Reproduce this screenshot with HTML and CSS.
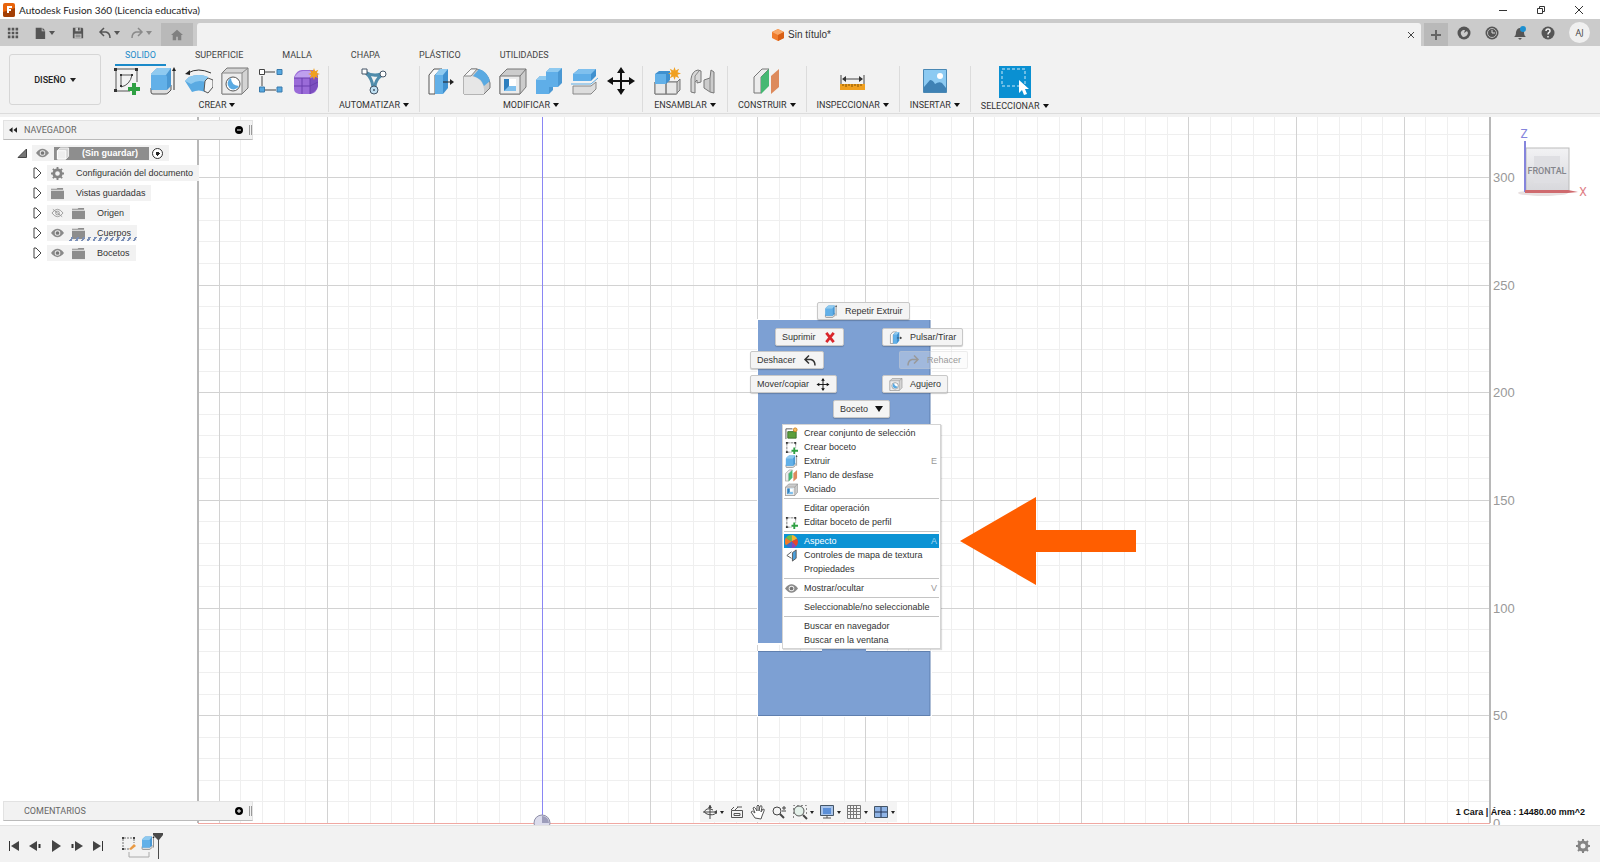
FILE: index.html
```html
<!DOCTYPE html>
<html lang="es">
<head>
    <meta charset="UTF-8">
    <meta name="viewport" content="width=device-width, initial-scale=1.0">
    <title>Autodesk Fusion 360 (Licencia educativa)</title>
    <link rel="stylesheet" href="styles.css">
</head>
<body>

    <!-- Iconos compartidos -->
    <svg class="sprite" aria-hidden="true">
        <symbol id="i-boceto" viewBox="0 0 28 28">
            <path d="M3 2h20M3 2v22M3 24h14M24 3v12" fill="none" stroke="#555" stroke-width="1"/>
            <path d="M8 8v12q9-2 11-12M8 8h11" fill="none" stroke="#555" stroke-width="1"/>
            <path d="M1 1h3v3H1zM22 1h3v3h-3zM1 22h3v3H1zM7 7h2v2H7zM18 7h2v2h-2zM7 18h2v2H7z" fill="#333"/>
            <path d="M19 16h4v4h4v4h-4v4h-4v-4h-4v-4h4z" fill="#2fa043"/>
        </symbol>
        <symbol id="i-boceto-s" viewBox="0 0 14 14">
            <path d="M2 2h10M2 2v10M2 12h5M11.500 2v5" fill="none" stroke="#777" stroke-dasharray="3 1"/>
            <path d="M1 1h2v2H1zM10 1h2v2h-2zM1 11h2v2H1z" fill="#333"/>
            <path d="M10 7v7M7 10.500h7" stroke="#2fa043" stroke-width="2"/>
        </symbol>
        <symbol id="i-extruir" viewBox="0 0 28 28">
            <path d="M2 21v4q0 2 2 2h12q2 0 3-1l3-3v-5z" fill="#ddd" stroke="#555"/>
            <path d="M2 7l5-5q1-1 2-1h13v18l-4 4H2z" fill="#4a98d3"/>
            <path d="M2 8h14q2 0 2 2v13H4q-2 0-2-2z" fill="#62b0e8"/>
            <path d="M2 7l5-5q1-1 2-1h13l-5 7H2z" fill="#8fcaf0"/>
            <path d="M25 3v20" stroke="#333"/>
            <path d="M25 0l2 4h-4z" fill="#222"/>
        </symbol>
        <symbol id="i-revolucion" viewBox="0 0 28 28">
            <path d="M3 6q10-6 23 0" fill="none" stroke="#333"/>
            <path d="M0 7l5-4v5z" fill="#222"/>
            <path d="M0 14l4-4q10-4 19 0l-3 15q-6-3-13 0z" fill="#5aaae2"/>
            <path d="M0 14l4-4q10-4 19 0l-3 5q-7-3-14 2z" fill="#8fcaf0"/>
            <path d="M20 14l3-3 5 2v7l-5 6-4-2z" fill="#f4f4f4" stroke="#555"/>
        </symbol>
        <symbol id="i-agujero" viewBox="0 0 28 28">
            <path d="M1 6l5-5h21v20l-6 6H1z" fill="#d4d4d4" stroke="#777"/>
            <path d="M1 6h20v21H1z" fill="#ececec" stroke="#888"/>
            <path d="M21 6l6-5" stroke="#888"/>
            <circle cx="12" cy="17" r="7" fill="#fff" stroke="#555"/>
            <path d="M10 11a6 6 0 1 0 8 8q-8-1-8-8z" fill="#5aaae2"/>
        </symbol>
        <symbol id="i-patron" viewBox="0 0 28 28">
            <path d="M5 9v10M8 5h10M8 23h11" stroke="#444" fill="none"/>
            <path d="M2.500 2.500h5v5h-5z" fill="#fff" stroke="#444"/>
            <path d="M20 2.500h5v5h-5zM20 20h5v5h-5zM2.500 20h5v5h-5z" fill="#56a8e0" stroke="#3a7bac"/>
        </symbol>
        <symbol id="i-estrella" viewBox="0 0 14 14">
            <path d="M7 0l1.300 3.800L12 2l-1.800 3.700L14 7l-3.800 1.300L12 12l-3.700-1.800L7 14l-1.300-3.800L2 12l1.800-3.700L0 7l3.800-1.300L2 2l3.700 1.800z" fill="#f0a020"/>
        </symbol>
        <symbol id="i-forma" viewBox="0 0 28 28">
            <path d="M1 10q3-7 8-7h11q5 1 5 6v10q-1 7-8 8H6q-5-1-5-5z" fill="#9a6bd8"/>
            <path d="M1 11q4-7 9-7h8q2 4-2 7z" fill="#bfa0ee"/>
            <path d="M17 12q5-3 8-3v10q-2 6-8 8z" fill="#7c4fbf"/>
            <path d="M9 11v16M1 19h16M17 11v16M1 11h16M17 19l8-4" stroke="#6a3fae" fill="none"/>
            <use href="#i-estrella" x="15" y="1" width="12" height="12"/>
        </symbol>
        <symbol id="i-automatizar" viewBox="0 0 28 28">
            <path d="M5 5q8 5 16 2M6 6q6 5 7 14M22 8q-7 5-7 12" fill="none" stroke="#4f8cab" stroke-width="3"/>
            <path d="M2 2h5v5H2z" fill="#fff" stroke="#456"/>
            <circle cx="23" cy="7" r="3" fill="#fff" stroke="#456"/>
            <circle cx="14" cy="23" r="4" fill="#bfe0f2" stroke="#456"/>
            <circle cx="14" cy="23" r="1" fill="#456"/>
        </symbol>
        <symbol id="i-pulsar" viewBox="0 0 28 28">
            <path d="M2 8l5-6h8L8 8v19H2z" fill="#fafafa" stroke="#555"/>
            <path d="M8 8l5-6h8v19l-5 6H8z" fill="#3f90cf"/>
            <path d="M8 8h8v19H8z" fill="#62b0e8"/>
            <path d="M8 8l5-6h8l-5 6z" fill="#8fcaf0"/>
            <path d="M16 15h9" stroke="#222"/>
            <path d="M23 12l4 3-4 3z" fill="#222"/>
        </symbol>
        <symbol id="i-empalme" viewBox="0 0 28 28">
            <path d="M1 9l7-7h6q11 3 13 14v5l-6 6H1z" fill="#ccc" stroke="#777"/>
            <path d="M1 9h6q12 1 14 13v5H1z" fill="#e6e6e6"/>
            <path d="M1 9l7-7h6l-6 7z" fill="#f8f8f8" stroke="#888"/>
            <path d="M10 9l6-7q8 2 11 12l-6 5q-3-8-11-10z" fill="#5aaae2"/>
        </symbol>
        <symbol id="i-vaciado" viewBox="0 0 28 28">
            <path d="M1 9l7-7h19v18l-6 7H1z" fill="#ccc" stroke="#777"/>
            <path d="M1 9h20v18H1z" fill="#ececec" stroke="#777"/>
            <path d="M21 9l6-7" stroke="#777"/>
            <path d="M5 12h12v12H5z" fill="#7fc0ee"/>
            <path d="M10 12h7v7h-7z" fill="#fff"/>
            <path d="M5 12h5v7l-5 5z" fill="#2f7fbe"/>
        </symbol>
        <symbol id="i-combinar" viewBox="0 0 28 28">
            <path d="M1 13l4-4h6V5l4-4h12v15l-4 4h-5v3l-4 4H1z" fill="#4a98d3"/>
            <path d="M1 13h10V5h12v15h-9v7H1z" fill="#5faee8"/>
            <path d="M11 5l4-4h12l-4 4zM1 13l4-4h6v4z" fill="#8fcaf0"/>
        </symbol>
        <symbol id="i-dividir" viewBox="0 0 28 28">
            <path d="M2 7l6-5h17v7l-5 5H2z" fill="#3f90cf"/>
            <path d="M2 7h18v7H2z" fill="#5faee8"/>
            <path d="M2 7l6-5h17l-5 5z" fill="#7fc0ee"/>
            <path d="M0 17h20l7-6" stroke="#5aaae2" fill="none"/>
            <path d="M2 19h18l5-4v7l-5 5H2z" fill="#ddd" stroke="#888"/>
        </symbol>
        <symbol id="i-mover" viewBox="0 0 28 28">
            <path d="M14 4v20M4 14h20" stroke="#111" stroke-width="2"/>
            <path d="M14 0l4 6h-8zM14 28l4-6h-8zM0 14l6-4v8zM28 14l-6-4v8z" fill="#111"/>
        </symbol>
        <symbol id="i-componente" viewBox="0 0 28 28">
            <path d="M2 15h22l3-3v11l-4 4H2z" fill="#ccc" stroke="#777"/>
            <path d="M2 15h11v12H2zM13 15h11v12H13z" fill="#e8e8e8" stroke="#777"/>
            <path d="M2 7l4-3h11v9l-4 4H2z" fill="#3f90cf"/>
            <path d="M2 7h11v10H2z" fill="#62b0e8"/>
            <use href="#i-estrella" x="15" y="0" width="13" height="13"/>
        </symbol>
        <symbol id="i-union" viewBox="0 0 28 28">
            <path d="M2 12q1-8 7-9l3 1v11l-4 1v-3l-2 2v11l-4-1z" fill="#d8d8d8" stroke="#777"/>
            <path d="M6 15V9l4-5" fill="none" stroke="#888"/>
            <path d="M22 3l3 2v21l-4-1-6-4v-8l6-2z" fill="#ccc" stroke="#777"/>
            <path d="M21 11v14" stroke="#888"/>
        </symbol>
        <symbol id="i-plano" viewBox="0 0 28 28">
            <path d="M1 10l8-8h7L8 10v16H1z" fill="#ececec" stroke="#777"/>
            <path d="M8 10l8-8v17l-8 8z" fill="#46b873"/>
            <path d="M18 9l8-7v18l-8 7z" fill="#dd8a5c"/>
        </symbol>
        <symbol id="i-medir" viewBox="0 0 28 28">
            <path d="M2 8v9M25 8v9M4 12h19" stroke="#444"/>
            <path d="M3 12l4-3v6zM24 12l-4-3v6z" fill="#333"/>
            <path d="M1 17h25v6H1z" fill="#f0a020"/>
            <path d="M4 17v2M7 17v3M10 17v2M13 17v3M16 17v2M19 17v3M22 17v2" stroke="#805000"/>
        </symbol>
        <symbol id="i-imagen" viewBox="0 0 28 28">
            <path d="M2.500 2.500h23v23h-23z" fill="#8ccaf2" stroke="#4a88b4"/>
            <path d="M3 20l6-7q3 0 5 4 4-3 7-1l4 5v4H3z" fill="#3f82b5"/>
            <circle cx="19" cy="9" r="3" fill="#fff"/>
        </symbol>
        <symbol id="i-seleccionar" viewBox="0 0 32 32">
            <path d="M0 0h32v32H0z" fill="#0a90d2"/>
            <path d="M3 3h23v17H3z" fill="none" stroke="#cfeaf8" stroke-dasharray="3 2"/>
            <path d="M20 14v13l3-3 2 5 3-1-2-5h4z" fill="#fff"/>
        </symbol>
        <symbol id="i-ojo" viewBox="0 0 14 10">
            <path d="M0 5q7-9 14 0-7 9-14 0z" fill="#8a8a8a"/>
            <circle cx="7" cy="5" r="3" fill="#eee"/>
            <circle cx="7" cy="5" r="2" fill="#777"/>
        </symbol>
        <symbol id="i-ojo-no" viewBox="0 0 14 10">
            <path d="M1 5q6-8 12 0-6 8-12 0zM2 1l10 8" fill="none" stroke="#999"/>
            <circle cx="7" cy="5" r="2" fill="none" stroke="#999"/>
        </symbol>
        <symbol id="i-carpeta" viewBox="0 0 14 12">
            <path d="M0 3h14v9H0z" fill="#8d8d8d"/>
            <path d="M0 1h6l1-1h6v2H0z" fill="#8d8d8d"/>
        </symbol>
        <symbol id="i-engranaje" viewBox="0 0 14 14">
            <circle cx="7" cy="7" r="4" fill="none" stroke="#848484" stroke-width="3"/>
            <path d="M7 0v3M7 11v3M0 7h3M11 7h3M2 2l2 2M10 10l2 2M12 2l-2 2M4 10l-2 2" stroke="#848484" stroke-width="2"/>
        </symbol>
        <symbol id="i-deshacer" viewBox="0 0 14 12">
            <path d="M6 1L2 5l4 4M2 5h6q4 1 4 6" fill="none" stroke="currentColor" stroke-width="1.500"/>
        </symbol>
        <symbol id="i-rehacer" viewBox="0 0 14 12">
            <path d="M8 1l4 4-4 4M12 5H6q-4 1-4 6" fill="none" stroke="currentColor" stroke-width="1.500"/>
        </symbol>
        <symbol id="i-conjunto" viewBox="0 0 14 14">
            <path d="M1 13V2h7" fill="none" stroke="#555"/>
            <path d="M3 5h9v7H3z" fill="#5c9f3c" stroke="#3c702a"/>
            <circle cx="11" cy="3" r="2" fill="#f3c060" stroke="#d08020"/>
        </symbol>
        <symbol id="i-aspecto" viewBox="0 0 14 14">
            <path d="M7 7V0a7 7 0 0 1 6 4z" fill="#f4b52c"/>
            <path d="M7 7l6-3a7 7 0 0 1-1 8z" fill="#e8452c"/>
            <path d="M7 7l5 5a7 7 0 0 1-5 2z" fill="#8b45b8"/>
            <path d="M7 7v7a7 7 0 0 1-6-3z" fill="#3b6fd0"/>
            <path d="M7 7l-6 4a7 7 0 0 1 0-8z" fill="#f07a28"/>
            <path d="M7 7L1 3a7 7 0 0 1 6-3z" fill="#6cbf45"/>
        </symbol>
        <symbol id="i-textura" viewBox="0 0 14 14">
            <path d="M7 3L2 7l5 3" fill="none" stroke="#555"/>
            <path d="M8 4l4-3v9l-4 3z" fill="#4a9fdb" stroke="#555"/>
        </symbol>
    </svg>

    <header class="titlebar">
        <svg class="logo" viewBox="0 0 12 14"><rect width="12" height="14" rx="2" fill="#e8640c"/><path d="M0 9l12-4v7q0 2-2 2H2q-2 0-2-2z" fill="#a33f05"/><path d="M4 10V3h5v2H6v1h2v2H6v2z" fill="#fff"/></svg>
        <h1>Autodesk Fusion 360 (Licencia educativa)</h1>
        <div class="window-controls">
            <button aria-label="Minimizar"><svg viewBox="0 0 10 10"><path d="M1 5.500h8" stroke="#333"/></svg></button>
            <button aria-label="Restaurar"><svg viewBox="0 0 10 10"><path d="M1.500 3.500h5v5h-5zM3.500 3V1.500h5v5H7" fill="none" stroke="#333"/></svg></button>
            <button aria-label="Cerrar"><svg viewBox="0 0 10 10"><path d="M1 1l8 8M9 1L1 9" stroke="#333"/></svg></button>
        </div>
    </header>

    <div class="tabbar">
        <div class="quick">
            <button aria-label="Panel de datos"><svg class="ico-s" viewBox="0 0 14 14"><path d="M1 1h3v3H1zM5.500 1h3v3h-3zM10 1h3v3h-3zM1 5.500h3v3H1zM5.500 5.500h3v3h-3zM10 5.500h3v3h-3zM1 10h3v3H1zM5.500 10h3v3h-3zM10 10h3v3h-3z" fill="#555"/></svg></button>
            <button class="with-arrow" aria-label="Archivo"><svg class="ico-s" viewBox="0 0 14 14"><path d="M2 1h7v4h4v9H2zM10 1l3 3h-3z" fill="#555"/></svg><span class="arrow"></span></button>
            <button class="save" aria-label="Guardar"><svg class="ico-s" viewBox="0 0 14 14"><path d="M1 1h11l1 1v11H1z" fill="#555"/><path d="M4 1h6v4H4zM3 8h8v5H3z" fill="#cbcbcb"/><path d="M7 1h2v3H7zM4 9h6v1H4zM4 11h6v1H4z" fill="#555"/></svg></button>
            <button class="with-arrow" aria-label="Deshacer"><svg class="ico-s"><use href="#i-deshacer"/></svg><span class="arrow"></span></button>
            <button class="with-arrow off" aria-label="Rehacer"><svg class="ico-s"><use href="#i-rehacer"/></svg><span class="arrow"></span></button>
        </div>
        <button class="home" aria-label="Inicio"><svg class="ico-s" viewBox="0 0 14 14"><path d="M7 1l7 6h-2v6H8V9H6v4H2V7H0z" fill="#808080"/></svg></button>
        <div class="doc-tab">
            <div class="doc-name">
                <svg viewBox="0 0 12 12"><path d="M6 0l6 3v6l-6 3-6-3V3z" fill="#f07c2c"/><path d="M6 0l6 3-6 3-6-3z" fill="#f9a868"/><path d="M6 6l6-3v6l-6 3z" fill="#d85f14"/></svg>
                <span>Sin título*</span>
            </div>
            <button aria-label="Cerrar documento"><svg viewBox="0 0 10 10"><path d="M2 2l6 6M8 2L2 8" stroke="#444"/></svg></button>
        </div>
        <button class="new-tab" aria-label="Nuevo diseño"><svg viewBox="0 0 12 12"><path d="M6 1v10M1 6h10" stroke="#666" stroke-width="2"/></svg></button>
        <div class="account">
            <button aria-label="Extensiones"><svg viewBox="0 0 14 14"><circle cx="7" cy="7" r="6.500" fill="#555"/><path d="M5 10q-3-4 1-6h2L7 7l3-2 1 2q-1 4-5 4z" fill="#cbcbcb"/></svg></button>
            <button aria-label="Estado de trabajos"><svg viewBox="0 0 14 14"><circle cx="7" cy="7" r="6.500" fill="#555"/><circle cx="7" cy="7" r="4.500" fill="none" stroke="#bbb"/><path d="M7 4v3h3" fill="none" stroke="#ddd"/></svg></button>
            <button aria-label="Notificaciones"><svg viewBox="0 0 14 14"><path d="M1 11q2-1 2-5 1-4 4-4t4 4q0 4 2 5zM5 12h4l-2 2z" fill="#555"/><circle cx="10" cy="3" r="3" fill="#1c8fd0"/></svg></button>
            <button aria-label="Ayuda"><svg viewBox="0 0 14 14"><circle cx="7" cy="7" r="6.500" fill="#555"/><path d="M5 5q0-2 2-2t2 2q0 1-1 1.500T7 8.500M7 10v1.500" fill="none" stroke="#eee" stroke-width="1.500"/></svg></button>
            <button class="avatar">AJ</button>
        </div>
    </div>

    <section class="ribbon">
        <button class="workspace">DISEÑO <span class="arrow"></span></button>
        <div class="ribbon-body">
            <nav class="ribbon-tabs">
                <a href="#" class="active">SOLIDO</a>
                <a href="#">SUPERFICIE</a>
                <a href="#">MALLA</a>
                <a href="#">CHAPA</a>
                <a href="#">PLÁSTICO</a>
                <a href="#">UTILIDADES</a>
            </nav>
            <div class="groups">
                <div class="group wide">
                    <div class="tools">
                        <button aria-label="Crear boceto"><svg><use href="#i-boceto"/></svg></button>
                        <button aria-label="Extruir"><svg><use href="#i-extruir"/></svg></button>
                        <button aria-label="Revolución"><svg><use href="#i-revolucion"/></svg></button>
                        <button aria-label="Agujero"><svg><use href="#i-agujero"/></svg></button>
                        <button aria-label="Patrón"><svg><use href="#i-patron"/></svg></button>
                        <button aria-label="Crear forma"><svg><use href="#i-forma"/></svg></button>
                    </div>
                    <button class="group-name">CREAR <span class="arrow"></span></button>
                </div>
                <div class="group">
                    <div class="tools">
                        <button aria-label="Modelado automático"><svg><use href="#i-automatizar"/></svg></button>
                    </div>
                    <button class="group-name">AUTOMATIZAR <span class="arrow"></span></button>
                </div>
                <div class="group wide">
                    <div class="tools">
                        <button aria-label="Pulsar/Tirar"><svg><use href="#i-pulsar"/></svg></button>
                        <button aria-label="Empalme"><svg><use href="#i-empalme"/></svg></button>
                        <button aria-label="Vaciado"><svg><use href="#i-vaciado"/></svg></button>
                        <button aria-label="Combinar"><svg><use href="#i-combinar"/></svg></button>
                        <button aria-label="Dividir cuerpo"><svg><use href="#i-dividir"/></svg></button>
                        <button aria-label="Mover/copiar"><svg><use href="#i-mover"/></svg></button>
                    </div>
                    <button class="group-name">MODIFICAR <span class="arrow"></span></button>
                </div>
                <div class="group">
                    <div class="tools">
                        <button aria-label="Nuevo componente"><svg><use href="#i-componente"/></svg></button>
                        <button aria-label="Unión"><svg><use href="#i-union"/></svg></button>
                    </div>
                    <button class="group-name">ENSAMBLAR <span class="arrow"></span></button>
                </div>
                <div class="group">
                    <div class="tools">
                        <button aria-label="Plano de desfase"><svg><use href="#i-plano"/></svg></button>
                    </div>
                    <button class="group-name">CONSTRUIR <span class="arrow"></span></button>
                </div>
                <div class="group">
                    <div class="tools">
                        <button aria-label="Medir"><svg><use href="#i-medir"/></svg></button>
                    </div>
                    <button class="group-name">INSPECCIONAR <span class="arrow"></span></button>
                </div>
                <div class="group">
                    <div class="tools">
                        <button aria-label="Insertar imagen"><svg><use href="#i-imagen"/></svg></button>
                    </div>
                    <button class="group-name">INSERTAR <span class="arrow"></span></button>
                </div>
                <div class="group">
                    <div class="tools">
                        <button class="big" aria-label="Seleccionar"><svg><use href="#i-seleccionar"/></svg></button>
                    </div>
                    <button class="group-name">SELECCIONAR <span class="arrow"></span></button>
                </div>
            </div>
        </div>
    </section>

    <main class="canvas">
        <svg class="scene" id="scene">
            <path id="minor" stroke="#efefef" fill="none"/>
            <path id="major" stroke="#d2d2d2" fill="none"/>
            <path id="edges" stroke="#b8b8b8" stroke-width="2" fill="none"/>
            <path id="axis" stroke="#8a86f4" fill="none"/>
            <path id="base" stroke="#f0a8a2" fill="none"/>
            <g id="origin">
                <circle r="8" fill="#dcdcec" stroke="#8f8fa8"/>
                <path d="M0 0v-7a7 7 0 0 1 7 7z" fill="#9d9dbb"/>
            </g>
            <!-- Cuerpo seleccionado -->
            <path d="M757 202h175v326h-66v6h66v66H757v-66h65v-6h-65z" fill="#fff"/>
            <path d="M758 203h172v323H758zM822 526h44v9h-44zM758 534h172v65H758z" fill="#7da0d3"/>
            <path d="M758 534.500h64M866 534.500h64M758 598.500h172M930 203v323M930 534v65" stroke="#5f7fae" fill="none"/>
            <g id="labels" fill="#999"></g>
        </svg>

        <!-- Cubo de vistas -->
        <svg class="viewcube" viewBox="0 0 80 80">
            <defs>
                <linearGradient id="cara" x1="0" y1="0" x2="0" y2="1">
                    <stop offset="0" stop-color="#f2f2f4"/>
                    <stop offset="1" stop-color="#d8d8dc"/>
                </linearGradient>
            </defs>
            <ellipse cx="33" cy="67" rx="25" ry="3" fill="#e8e0e0"/>
            <rect x="16" y="22" width="43" height="43" fill="url(#cara)" stroke="#bbb"/>
            <rect x="24" y="30" width="26" height="27" fill="#dfdfe3"/>
            <path d="M15 15v51" stroke="#8585dc" stroke-width="2"/>
            <path d="M15 64h43l10 2-10 1H15z" fill="#cf6a6e"/>
            <text x="14" y="12" text-anchor="middle" class="axis-z">Z</text>
            <text x="73" y="70" text-anchor="middle" class="axis-x">X</text>
            <text x="37" y="48" text-anchor="middle" class="face">FRONTAL</text>
        </svg>

        <!-- Navegador -->
        <aside class="browser">
            <div class="panel-head">
                <svg class="rewind" viewBox="0 0 9 8"><path d="M4 1v6L0 4zM9 1v6L5 4z" fill="#222"/></svg>
                <h2>NAVEGADOR</h2>
                <button aria-label="Minimizar navegador"><svg viewBox="0 0 8 8"><circle cx="4" cy="4" r="4"/><path d="M2 4h4" stroke="#fff"/></svg></button>
                <span class="grip"></span>
            </div>
            <ul class="tree">
                <li class="root">
                    <svg class="toggle" viewBox="0 0 10 10"><path d="M9.500 1v8.500H1z" fill="#777" stroke="#444"/></svg>
                    <div class="item">
                        <svg class="eye"><use href="#i-ojo"/></svg>
                        <span class="doc"><svg viewBox="0 0 14 14"><path d="M1 4l3-3h9v9l-3 3H1z" fill="#d4d4d4" stroke="#f5f5f5"/><path d="M1 4h9v9H1z" fill="#eee" stroke="#fff"/></svg>(Sin guardar)</span>
                        <input type="radio" name="activo" aria-label="Activar componente" checked>
                    </div>
                </li>
                <li>
                    <svg class="toggle" viewBox="0 0 10 12"><path d="M2 1h2l5 5-5 5H2z" fill="#fff" stroke="#444"/></svg>
                    <div class="item"><svg class="gear"><use href="#i-engranaje"/></svg><span class="label">Configuración del documento</span></div>
                </li>
                <li>
                    <svg class="toggle" viewBox="0 0 10 12"><path d="M2 1h2l5 5-5 5H2z" fill="#fff" stroke="#444"/></svg>
                    <div class="item"><svg class="folder"><use href="#i-carpeta"/></svg><span class="label">Vistas guardadas</span></div>
                </li>
                <li>
                    <svg class="toggle" viewBox="0 0 10 12"><path d="M2 1h2l5 5-5 5H2z" fill="#fff" stroke="#444"/></svg>
                    <div class="item"><svg class="eye"><use href="#i-ojo-no"/></svg><svg class="folder"><use href="#i-carpeta"/></svg><span class="label">Origen</span></div>
                </li>
                <li>
                    <svg class="toggle" viewBox="0 0 10 12"><path d="M2 1h2l5 5-5 5H2z" fill="#fff" stroke="#444"/></svg>
                    <div class="item hatched"><svg class="eye"><use href="#i-ojo"/></svg><svg class="folder"><use href="#i-carpeta"/></svg><span class="label">Cuerpos</span></div>
                </li>
                <li>
                    <svg class="toggle" viewBox="0 0 10 12"><path d="M2 1h2l5 5-5 5H2z" fill="#fff" stroke="#444"/></svg>
                    <div class="item"><svg class="eye"><use href="#i-ojo"/></svg><svg class="folder"><use href="#i-carpeta"/></svg><span class="label">Bocetos</span></div>
                </li>
            </ul>
        </aside>

        <div class="panel-head comments">
            <h2>COMENTARIOS</h2>
            <button aria-label="Abrir comentarios"><svg viewBox="0 0 8 8"><circle cx="4" cy="4" r="4"/><path d="M2 4h4M4 2v4" stroke="#fff"/></svg></button>
            <span class="grip"></span>
        </div>

        <!-- Menú radial -->
        <button class="mark repeat"><svg><use href="#i-extruir"/></svg>Repetir Extruir</button>
        <button class="mark delete">Suprimir<svg viewBox="0 0 14 14"><path d="M3 2l8 10M11 2L3 12" stroke="#d9262c" stroke-width="3"/></svg></button>
        <button class="mark press"><svg><use href="#i-pulsar"/></svg>Pulsar/Tirar</button>
        <button class="mark undo">Deshacer<svg><use href="#i-deshacer"/></svg></button>
        <button class="mark redo" disabled><svg><use href="#i-rehacer"/></svg>Rehacer</button>
        <button class="mark move">Mover/copiar<svg><use href="#i-mover"/></svg></button>
        <button class="mark hole"><svg><use href="#i-agujero"/></svg>Agujero</button>
        <button class="mark sketch">Boceto<span class="arrow"></span></button>

        <!-- Menú contextual -->
        <div class="context-menu">
            <button><svg><use href="#i-conjunto"/></svg>Crear conjunto de selección</button>
            <button><svg><use href="#i-boceto-s"/></svg>Crear boceto</button>
            <button><svg><use href="#i-extruir"/></svg>Extruir<kbd>E</kbd></button>
            <button><svg><use href="#i-plano"/></svg>Plano de desfase</button>
            <button><svg><use href="#i-vaciado"/></svg>Vaciado</button>
            <hr>
            <button><svg></svg>Editar operación</button>
            <button><svg><use href="#i-boceto-s"/></svg>Editar boceto de perfil</button>
            <hr>
            <button class="selected"><svg><use href="#i-aspecto"/></svg>Aspecto<kbd>A</kbd></button>
            <button><svg><use href="#i-textura"/></svg>Controles de mapa de textura</button>
            <button><svg></svg>Propiedades</button>
            <hr>
            <button><svg><use href="#i-ojo"/></svg>Mostrar/ocultar<kbd>V</kbd></button>
            <hr>
            <button><svg></svg>Seleccionable/no seleccionable</button>
            <hr>
            <button><svg></svg>Buscar en navegador</button>
            <button><svg></svg>Buscar en la ventana</button>
        </div>

        <svg class="pointer" viewBox="0 0 176 88"><path d="M0 44L76 0v33h100v22H76v33z" fill="#ff5e00"/></svg>

        <!-- Barra de navegación -->
        <div class="navbar">
            <button aria-label="Órbita"><svg viewBox="0 0 16 16"><path d="M8 1v14M1 8h14M5 5q-5 3 0 5 6 2 9-1M11 6q-3-2-6-1" fill="none" stroke="#444"/><path d="M8 1l2 3H6zM12 8l3-2v4z" fill="#444"/></svg><span class="arrow"></span></button>
            <button aria-label="Mirar a"><svg viewBox="0 0 16 16"><path d="M2.500 6.500h11v7h-11zM5 9.500h6v2H5zM2 6l3-3M6 6l3-3M8 3h5" fill="none" stroke="#555"/></svg></button>
            <button aria-label="Encuadre"><svg viewBox="0 0 16 16"><path d="M5 14L1 8q1-2 4 1L3 4q1-2 3 1l1 2V2q1-2 2 0v5l1-5q2-1 2 1l-1 5 2-3q2 0 1 2l-2 5-1 3z" fill="#fff" stroke="#555"/></svg></button>
            <button aria-label="Zoom"><svg viewBox="0 0 16 16"><circle cx="6" cy="7" r="4" fill="none" stroke="#444"/><path d="M9 10l4 4" stroke="#444" stroke-width="2"/><path d="M11 4h4M13 2v4M11 7h4" stroke="#444"/></svg></button>
            <button aria-label="Ajustar"><svg viewBox="0 0 16 16"><circle cx="7" cy="7" r="5" fill="#e4f1ea" stroke="#555"/><path d="M11 11l4 4" stroke="#444" stroke-width="2"/><path d="M1.500 14V1.500h13V12" fill="none" stroke="#888" stroke-dasharray="2 2"/></svg><span class="arrow"></span></button>
            <button aria-label="Configuración de visualización"><svg viewBox="0 0 16 16"><path d="M1.500 1.500h13v10h-13z" fill="#a9c4ea" stroke="#456"/><path d="M4 4h8v6H4z" fill="#5b8fd8"/><path d="M4 14h8M8 11v3" stroke="#555"/></svg><span class="arrow"></span></button>
            <button aria-label="Rejilla"><svg viewBox="0 0 16 16"><path d="M1.500 1.500h13v13h-13zM4.500 1v14M7.500 1v14M10.500 1v14M1 4.500h14M1 7.500h14M1 10.500h14" fill="none" stroke="#777"/></svg><span class="arrow"></span></button>
            <button aria-label="Ventanas gráficas"><svg viewBox="0 0 16 16"><path d="M1.500 2.500h13v11h-13z" fill="#8fb4e6" stroke="#456"/><path d="M8 3v10M2 8h12" stroke="#235"/></svg><span class="arrow"></span></button>
        </div>

        <p class="status">1 Cara | Área : 14480.00 mm^2</p>
    </main>

    <footer class="timeline">
        <div class="playback">
            <button aria-label="Ir al inicio"><svg viewBox="0 0 12 12"><path d="M1.500 1v10" stroke="#333" stroke-width="1"/><path d="M11 1v10L3 6z" fill="#444"/></svg></button>
            <button aria-label="Paso atrás"><svg viewBox="0 0 12 12"><path d="M8 1v10L0 6z" fill="#444"/><path d="M10.500 4v4" stroke="#333" stroke-width="2"/></svg></button>
            <button aria-label="Reproducir"><svg viewBox="0 0 12 12"><path d="M2 0v12l9-6z" fill="#444"/></svg></button>
            <button aria-label="Paso adelante"><svg viewBox="0 0 12 12"><path d="M4 1v10l8-5z" fill="#444"/><path d="M1.500 4v4" stroke="#333" stroke-width="2"/></svg></button>
            <button aria-label="Ir al final"><svg viewBox="0 0 12 12"><path d="M1 1v10l8-5z" fill="#444"/><path d="M10.500 1v10" stroke="#333" stroke-width="1"/></svg></button>
        </div>
        <svg class="history" viewBox="0 0 44 30">
            <path d="M3 7h9M2 8v9M3 18h6M13 8v4" stroke="#777" stroke-dasharray="2 1" fill="none"/>
            <path d="M1 6h2v2H1zM12 6h2v2h-2zM1 17h2v2H1z" fill="#444"/>
            <path d="M8 18l5-5 2 2-5 4z" fill="#e99a44"/>
            <use href="#i-extruir" x="20" y="5" width="14" height="14"/>
            <path d="M8 21v5h20v-5" fill="none" stroke="#aaa"/>
            <path d="M32 2h10v2l-4 5v19h-1V9l-5-5z" fill="#4a4a4a"/>
        </svg>
        <button class="settings" aria-label="Preferencias"><svg><use href="#i-engranaje"/></svg></button>
    </footer>

    <script>
        // Rejilla del plano XZ: el eje Z pasa por x = 542 y el origen queda en la base
        const scene = document.getElementById('scene');
        const STEP = 21.54;
        const ZERO_X = 542;

        function drawGrid() {
            const width = scene.clientWidth;
            const height = scene.clientHeight;
            const left = 198;
            const right = width - 110;
            const zeroY = height - 2;
            let minor = '';
            let major = '';

            for (let i = Math.ceil((left - ZERO_X) / STEP); ZERO_X + i * STEP < right; i++) {
                const x = Math.round(ZERO_X + i * STEP) + 0.5;
                const line = `M${x} 0V${zeroY}`;
                if (i % 5 === 0) major += line; else minor += line;
            }

            let labels = '';
            for (let i = 0; zeroY - i * STEP > 0; i++) {
                const y = Math.round(zeroY - i * STEP) + 0.5;
                const line = `M${left} ${y}H${right}`;
                if (i % 5 === 0) {
                    major += line;
                    labels += `<text x="${right + 3}" y="${y + 4}">${i * 10}</text>`;
                } else {
                    minor += line;
                }
            }

            document.getElementById('minor').setAttribute('d', minor);
            document.getElementById('major').setAttribute('d', major);
            document.getElementById('edges').setAttribute('d', `M${left} 0V${zeroY}M${right} 0V${zeroY}`);
            document.getElementById('axis').setAttribute('d', `M${ZERO_X + 0.5} 0V${zeroY}`);
            document.getElementById('base').setAttribute('d', `M${left} ${zeroY + 0.5}H${right}`);
            document.getElementById('origin').setAttribute('transform', `translate(${ZERO_X} ${zeroY})`);
            document.getElementById('labels').innerHTML = labels;
        }

        drawGrid();
        window.addEventListener('resize', drawGrid);
    </script>

</body>
</html>
```
FILE: styles.css
```css
* {
    box-sizing: border-box;
}
body {
    margin: 0;
    height: 100vh;
    display: flex;
    flex-direction: column;
    overflow: hidden;
    background-color: #f2f2f2;
    font-family: "Liberation Sans", Arial, sans-serif;
    font-size: 9px;
    color: #333;
}
button {
    display: flex;
    align-items: center;
    justify-content: center;
    padding: 0;
    border: none;
    background: none;
    font: inherit;
    color: inherit;
    cursor: pointer;
}
h1, h2, p, ul {
    margin: 0;
    padding: 0;
    font-weight: normal;
}
svg {
    display: block;
    flex-shrink: 0;
}
.sprite {
    position: absolute;
    width: 0;
    height: 0;
}
.arrow {
    border: 3px solid transparent;
    border-top: 4px solid currentColor;
    border-bottom: none;
}

/* Barra de título */
.titlebar {
    display: flex;
    align-items: center;
    height: 19px;
    padding: 0 16px 0 3px;
    background-color: #fff;
}
.titlebar .logo {
    width: 12px;
    height: 14px;
}
.titlebar h1 {
    margin-left: 4px;
    font-family: Lato, sans-serif;
    font-size: 10px;
    line-height: 18px;
    color: #222;
}
.window-controls {
    display: flex;
    gap: 28px;
    margin-left: auto;
}
.window-controls svg,
.doc-tab svg {
    width: 10px;
    height: 10px;
}

/* Barra de pestañas */
.tabbar {
    display: flex;
    align-items: center;
    height: 27px;
    padding-top: 4px;
    background-color: #cbcbcb;
    color: #555;
}
.tabbar .ico-s {
    width: 14px;
    height: 12px;
}
.quick {
    display: flex;
    align-items: center;
    width: 161px;
    padding: 0 6px 4px;
    gap: 13px;
}
.with-arrow {
    gap: 2px;
}
.quick .with-arrow {
    margin-right: -3px;
}
.quick .save {
    margin-left: 6px;
}
.quick .off {
    color: #8a8a8a;
}
.home {
    width: 32px;
    height: 23px;
    background-color: #b9b9b9;
}
.doc-tab {
    flex: 1;
    display: flex;
    align-items: center;
    height: 23px;
    margin-left: 4px;
    padding-right: 5px;
    background-color: #f2f2f2;
    border-radius: 3px 3px 0 0;
}
.doc-name {
    flex: 1;
    display: flex;
    justify-content: center;
    align-items: center;
    gap: 4px;
    font-size: 10px;
    color: #333;
}
.doc-tab .doc-name svg {
    width: 12px;
    height: 12px;
}
.new-tab {
    width: 24px;
    height: 23px;
    margin-left: 3px;
    background-color: #b9b9b9;
}
.new-tab svg {
    width: 12px;
    height: 12px;
}
.account {
    display: flex;
    align-items: center;
    gap: 14px;
    padding: 0 10px 4px 9px;
}
.account svg {
    width: 14px;
    height: 14px;
}
.account .avatar {
    width: 21px;
    height: 21px;
    border-radius: 50%;
    background-color: #f0f0f0;
    font-family: "Open Sans", sans-serif;
    color: #444;
}

/* Cinta de herramientas */
.ribbon {
    display: flex;
    height: 71px;
    border-bottom: 3px solid #f2f2f2;
    box-shadow: inset 0 -1px #dcdcdc;
    font-family: Roboto, sans-serif;
}
.workspace {
    width: 92px;
    height: 51px;
    margin: 8px 12px 0 9px;
    gap: 4px;
    border: 1px solid #d6d6d6;
    border-radius: 3px;
    font-weight: 500;
    color: #222;
}
.ribbon-tabs {
    display: flex;
    gap: 19px;
    padding: 1px 0 0 2px;
}
.ribbon-tabs a {
    padding: 2px 10px 0;
    height: 19px;
    line-height: 12px;
    border-bottom: 2px solid transparent;
    color: #444;
    text-decoration: none;
}
.ribbon-tabs a.active {
    color: #1b8ac9;
    border-bottom-color: #1b8ac9;
}
.groups {
    display: flex;
}
.group {
    position: relative;
    display: flex;
    flex-direction: column;
    align-items: center;
    padding: 0 10px;
    border-right: 1px solid #dcdcdc;
    height: 46px;
}
.group.wide {
    padding: 0 7px;
}
.group.wide:first-child {
    padding-left: 0;
}
.group:last-child {
    border-right: none;
}
.tools {
    display: flex;
    align-items: center;
    gap: 8px;
    height: 32px;
}
.tools svg {
    width: 28px;
    height: 28px;
}
.tools .big svg {
    width: 32px;
    height: 32px;
}
.group-name {
    gap: 3px;
    height: 16px;
    margin-top: 2px;
    color: #333;
}
.group-name .arrow {
    color: #111;
}

/* Área de trabajo */
.canvas {
    position: relative;
    flex: 1;
    background-color: #fff;
}
.scene {
    width: 100%;
    height: 100%;
    position: absolute;
    font-size: 13px;
}
.viewcube {
    position: absolute;
    top: 9px;
    right: 10px;
    width: 80px;
    height: 80px;
    font-family: Roboto, sans-serif;
}
.axis-z {
    font-size: 12px;
    fill: #8585dc;
}
.axis-x {
    font-size: 12px;
    fill: #e08086;
}
.face {
    font-size: 9px;
    font-weight: 500;
    fill: #85858c;
}

/* Navegador */
.browser {
    position: absolute;
    top: 3px;
    left: 3px;
    width: 250px;
}
.panel-head {
    display: flex;
    align-items: center;
    height: 20px;
    padding: 0 0 0 5px;
    background-color: #f2f2f2;
    border: 1px solid #e2e2e2;
    border-bottom-color: #bbb;
    font-family: Roboto, sans-serif;
}
.panel-head h2 {
    flex: 1;
    font-size: 9px;
    color: #666;
}
.panel-head svg {
    width: 8px;
    height: 8px;
}
.rewind {
    margin-right: 7px;
}
.grip {
    width: 3px;
    height: 10px;
    margin-left: 6px;
    border: solid #999;
    border-width: 0 1px;
}
.comments {
    position: absolute;
    left: 3px;
    bottom: 4px;
    width: 250px;
    padding-left: 20px;
}
.tree {
    padding-top: 3px;
    list-style: none;
}
.tree li {
    display: flex;
    align-items: center;
    gap: 5px;
    height: 20px;
    padding-left: 29px;
}
.tree .root {
    gap: 5px;
    padding-left: 14px;
}
.toggle {
    width: 10px;
    height: 12px;
}
.item {
    display: flex;
    align-items: center;
    height: 16px;
    padding: 0 6px 0 4px;
    background-color: #f2f2f2;
}
.item .eye {
    width: 13px;
    height: 10px;
}
.item .gear,
.item .folder {
    width: 13px;
    height: 13px;
}
.item .label {
    margin-left: 12px;
}
.item .eye + .folder {
    margin-left: 8px;
}
.doc {
    display: flex;
    align-items: center;
    gap: 12px;
    height: 13px;
    margin-left: 5px;
    padding: 0 11px 0 2px;
    background-color: #8e8e8e;
    color: #fff;
    font-weight: bold;
}
.doc svg {
    width: 14px;
    height: 13px;
}
.item input {
    appearance: none;
    width: 11px;
    height: 11px;
    margin: 0 0 0 3px;
    border: 1px solid #333;
    border-radius: 50%;
    background: radial-gradient(#222 2px, #fff 2px);
}
.hatched {
    position: relative;
}
.hatched::after {
    content: "";
    position: absolute;
    left: 21px;
    right: 0;
    bottom: 0;
    height: 4px;
    background: repeating-linear-gradient(120deg, transparent 0 3px, #7a8fb8 3px 5px);
}

/* Menú radial */
.mark {
    position: absolute;
    height: 18px;
    padding: 0 6px;
    gap: 7px;
    background-color: #f4f4f4;
    border: 1px solid #c8c8c8;
    border-radius: 2px;
    box-shadow: 0 1px 1px #0003;
    white-space: nowrap;
}
.mark svg {
    width: 14px;
    height: 13px;
}
.repeat { left: 817px; top: 185px; }
.delete { left: 775px; top: 211px; }
.press { left: 882px; top: 211px; }
.undo { left: 750px; top: 234px; }
.redo { left: 899px; top: 234px; }
.move { left: 750px; top: 258px; }
.hole { left: 882px; top: 258px; }
.sketch { left: 833px; top: 283px; }
.mark.redo {
    background-color: #f4f4f44d;
    border-color: #c8c8c84d;
    box-shadow: none;
    color: #999;
}
.mark .arrow {
    border-width: 6px 4px 0;
    color: #111;
}

/* Menú contextual */
.context-menu {
    position: absolute;
    left: 782px;
    top: 307px;
    width: 159px;
    padding: 1px;
    background-color: #fff;
    border: 1px solid #d4d4d4;
    box-shadow: 1px 1px 1px #0002;
}
.context-menu button {
    width: 100%;
    height: 14px;
    justify-content: flex-start;
    gap: 6px;
    padding: 0 2px 0 1px;
}
.context-menu svg {
    width: 13px;
    height: 13px;
}
.context-menu hr {
    margin: 2px 0;
    border: none;
    border-top: 1px solid #c4c4c4;
}
.context-menu kbd {
    margin-left: auto;
    font: inherit;
    color: #999;
}
.context-menu .selected {
    background-color: #0c93d4;
    color: #fff;
}
.context-menu .selected kbd {
    color: #a9d8f0;
}
.pointer {
    position: absolute;
    left: 960px;
    top: 380px;
    width: 176px;
    height: 88px;
}

/* Barra de navegación */
.navbar {
    position: absolute;
    left: 700px;
    bottom: 3px;
    display: flex;
    gap: 5px;
    padding: 2px;
    background-color: #f4f4f4;
}
.navbar button {
    gap: 2px;
}
.navbar svg {
    width: 16px;
    height: 16px;
}
.navbar .arrow {
    border-width: 3px 2px 0;
    color: #222;
}
.status {
    position: absolute;
    right: 15px;
    bottom: 8px;
    font-weight: bold;
    line-height: 10px;
    color: #111;
}

/* Línea de tiempo */
.timeline {
    display: flex;
    align-items: center;
    height: 37px;
    padding: 4px 10px 0 8px;
    border-top: 1px solid #e2e2e2;
}
.playback {
    display: flex;
    gap: 9px;
}
.playback svg {
    width: 12px;
    height: 12px;
}
.history {
    width: 44px;
    height: 30px;
    margin-left: 17px;
}
.settings {
    margin-left: auto;
}
.settings svg {
    width: 14px;
    height: 14px;
}
```
